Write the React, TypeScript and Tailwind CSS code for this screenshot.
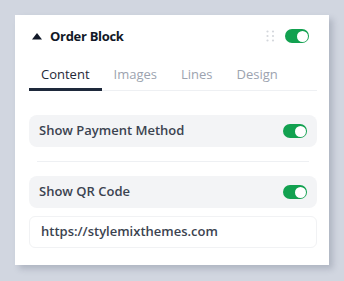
import React from "react";

function Toggle() {
  return (
    <div className="relative h-[14px] w-[24px] rounded-full bg-[#12a150]">
      <div className="absolute right-[1px] top-[1.5px] h-[11px] w-[11px] rounded-full bg-white" />
    </div>
  );
}

function Handle() {
  return (
    <svg width="9" height="12" viewBox="0 0 9 12">
      {[0, 1].map((c) =>
        [0, 1, 2].map((r) => (
          <circle key={`${c}-${r}`} cx={1.5 + c * 5.5} cy={1.5 + r * 4.5} r={1.1} fill="#d4d7dc" />
        ))
      )}
    </svg>
  );
}

export default function App() {
  const tabs = ["Content", "Images", "Lines", "Design"];
  return (
    <div
      className="h-[281px] w-[344px] bg-[#d1d6e0] pl-[15px] pt-[15px]"
      style={{ fontFamily: '"Open Sans", "Noto Sans", sans-serif' }}
    >
      <div className="flex h-[250px] w-[314px] flex-col bg-white pl-[14px] pr-[12px] pt-[14px] shadow-[4px_4px_6px_rgba(60,70,90,0.22)]">
        {/* Header */}
        <div className="flex h-[14px] items-center pl-[3px] pr-[8px]">
          <svg width="10" height="7" viewBox="0 0 10 7" className="mr-[8px]">
            <polygon points="5,0 10,6.5 0,6.5" fill="#111827" />
          </svg>
          <span className="text-[13px] font-bold leading-none tracking-[-0.3px] text-[#111827]">Order Block</span>
          <div className="ml-auto flex items-center gap-[10px]">
            <Handle />
            <Toggle />
          </div>
        </div>
        {/* Tabs */}
        <div className="mt-[18px] flex border-b border-[#eef0f3]">
          {tabs.map((t, i) => (
            <div
              key={t}
              className={
                i === 0
                  ? "-mb-px flex h-[30px] items-center border-b-[3px] border-[#1e293b] px-[12px] text-[13px] text-[#1f2937]"
                  : "flex h-[29px] items-center px-[12px] pb-[2px] text-[13px] text-[#9ca3af]"
              }
            >
              {t}
            </div>
          ))}
        </div>
        {/* Row 1 */}
        <div className="mt-[24px] flex h-[32px] items-center rounded-[8px] bg-[#f3f4f6] pl-[10px] pr-[10px]">
          <span className="text-[13px] font-semibold text-[#3b4350]">Show Payment Method</span>
          <div className="ml-auto">
            <Toggle />
          </div>
        </div>
        <div className="mx-[8px] mt-[14px] h-px bg-[#eef0f3]" />
        {/* Row 2 */}
        <div className="mt-[14px] flex h-[32px] items-center rounded-[8px] bg-[#f3f4f6] pl-[10px] pr-[10px]">
          <span className="text-[13px] font-semibold text-[#3b4350]">Show QR Code</span>
          <div className="ml-auto">
            <Toggle />
          </div>
        </div>
        <div className="mt-[8px] flex h-[32px] items-center rounded-[6px] border border-[#f1f2f4] pl-[11px]">
          <span className="text-[13px] font-semibold text-[#3b4350]">https://stylemixthemes.com</span>
        </div>
      </div>
    </div>
  );
}
